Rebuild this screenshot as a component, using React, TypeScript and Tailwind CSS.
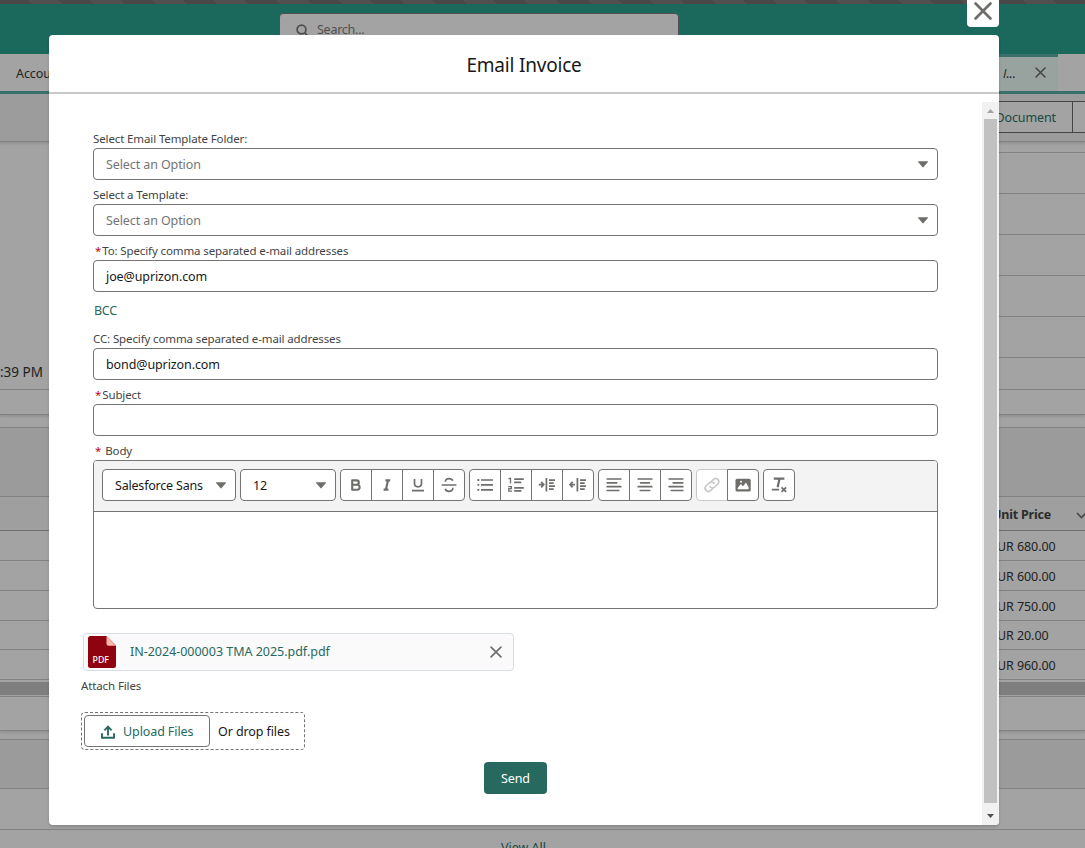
import type { ReactNode } from "react";

const FONT = "font-['Noto_Sans','Open_Sans',sans-serif]";

function Caret() {
  return (
    <svg width="12" height="7" viewBox="0 0 12 7" className="mt-px shrink-0">
      <path d="M1.4.3h9.2q.9 0 .3.8L6.6 6.1q-.6.6-1.2 0L1.1 1.1Q.5.3 1.4.3z" fill="#706e6b" />
    </svg>
  );
}

function Cross({ size, stroke, color }: { size: number; stroke: number; color: string }) {
  const near = stroke / 2 + 0.2;
  const far = size - near;
  return (
    <svg width={size} height={size} viewBox={`0 0 ${size} ${size}`} className="shrink-0">
      <path
        d={`M${near} ${near}L${far} ${far}M${far} ${near}L${near} ${far}`}
        stroke={color}
        strokeWidth={stroke}
        strokeLinecap="round"
        fill="none"
      />
    </svg>
  );
}

function Label({ children, required, gap }: { children: ReactNode; required?: boolean; gap?: string }) {
  return (
    <div className="flex h-4 items-center whitespace-nowrap text-[11.5px] leading-4 tracking-[-0.12px] text-[#444444]">
      {required && <span className={`ml-0.5 text-[#ba0517] ${gap ?? "mr-px"}`}>*</span>}
      <span>{children}</span>
    </div>
  );
}

function Field({ value, placeholder, combo }: { value?: string; placeholder?: string; combo?: boolean }) {
  return (
    <div className="mt-px flex h-8 items-center justify-between rounded-[4px] border border-[#747474] bg-white pr-2 pl-3 text-[12.5px] tracking-[-0.1px]">
      <span className={`pt-[2px] ${value ? "text-[#181818]" : "text-[#747474]"}`}>{value ?? placeholder}</span>
      {combo && <Caret />}
    </div>
  );
}

const G = "#706e6b";

function Icon({ children, color = G }: { children: ReactNode; color?: string }) {
  return (
    <svg width="18" height="18" viewBox="0 0 18 18" fill="none" stroke={color} strokeWidth="1.7">
      {children}
    </svg>
  );
}

const icons: Record<string, ReactNode> = {
  bold: <Icon><path d="M5.2 4.4h4.4a2.1 2.1 0 0 1 0 4.4H5.2zM5.2 8.8h5a2.4 2.4 0 0 1 0 4.9h-5z" strokeWidth="2.1" strokeLinejoin="round" /></Icon>,
  italic: <Icon><path d="M7.4 4.4h4.8M5.6 13.6h4.8M10 4.4L7.9 13.6" strokeWidth="2.1" /></Icon>,
  underline: <Icon><path d="M5.5 3v4.6q0 3.2 3.5 3.2t3.5-3.2V3M3 14.7h12" /></Icon>,
  strike: <Icon><path d="M1.6 9h14.8M12.8 4.8Q11.9 2.6 9.2 2.6q-3.7 0-3.9 3.2M5.2 12.7q.9 2.6 3.8 2.6 3.7 0 3.9-3.6" /></Icon>,
  bullets: <Icon><path d="M5 4h12M5 8.9h12M5 13.8h12" /><path d="M1.4 4h1.9M1.4 8.9h1.9M1.4 13.8h1.9" strokeWidth="1.8" /></Icon>,
  numbers: <Icon><path d="M7.2 3.2h9.6M7.2 6.3h7.2M7.2 11.8h9.6M7.2 14.9h7.2" strokeWidth="1.7" /><path d="M1.5 2.5H3.5V7.6M1.2 10.6H4.4V12.6H1.8V15.1H5" strokeWidth="1.3" /></Icon>,
  indent: <Icon><path d="M.8 8.6h4.4M3.2 5.9l2.5 2.7-2.5 2.7M8.4 2v13.6" strokeWidth="1.7" /><path d="M11 4.1h6M11 7.1h4.7M11 10.1h6M11 13.1h4.7" strokeWidth="1.6" /></Icon>,
  outdent: <Icon><path d="M1.6 8.6H6M3.6 5.9L1.1 8.6l2.5 2.7M8.4 2v13.6" strokeWidth="1.7" /><path d="M11 4.1h6M11 7.1h4.7M11 10.1h6M11 13.1h4.7" strokeWidth="1.6" /></Icon>,
  left: <Icon><path d="M2.2 3h13.6M2.2 6.8h9.6M2.2 10.7h13.6M2.2 14.5h11.5" strokeLinecap="round" /></Icon>,
  center: <Icon><path d="M2.2 3h13.6M4.6 6.8h8.8M2.2 10.7h13.6M4.3 14.5h9.4" strokeLinecap="round" /></Icon>,
  right: <Icon><path d="M2.2 3h13.6M6.2 6.8h9.6M2.2 10.7h13.6M4.3 14.5h11.5" strokeLinecap="round" /></Icon>,
  link: <Icon color="#c9c9c9"><path d="M7 10.7a3.2 3.2 0 0 0 4.8.3l3.1-3a3.1 3.1 0 0 0-4.4-4.5L8.6 5.2M11 7.3A3.2 3.2 0 0 0 6.2 7l-3.1 3a3.1 3.1 0 0 0 4.4 4.5l1.9-1.7" strokeLinecap="round" /></Icon>,
  image: <Icon><rect x="1.5" y="2.7" width="15.2" height="12.8" rx="1.6" fill={G} stroke="none" /><path d="M3.7 13.2v-1.3l3.1-3.9 2.2 2.3 3-3.9 2.6 4.9v1.9z" fill="#fff" stroke="none" /><circle cx="7" cy="5.8" r="1" fill="#fff" stroke="none" /></Icon>,
  clear: <Icon><path d="M3.8 2.6h10.6M9.6 2.6L7.6 11.2" strokeWidth="2.2" /><path d="M1.8 13.6h7.4" strokeWidth="1.8" /><path d="M11.5 11.4l4.6 4.4M16.1 11.4l-4.6 4.4" strokeWidth="1.8" /></Icon>,
};

function ToolGroup({ names }: { names: string[] }) {
  return (
    <div className="flex h-8 rounded-[4px]">
      {names.map((n, i) => (
        <div
          key={n}
          className={`flex h-8 items-center justify-center border bg-white ${i === 0 ? "w-8 rounded-l-[4px]" : "-ml-px w-8"} ${i === names.length - 1 ? "rounded-r-[4px]" : ""} ${n === "link" ? "border-[#c9c9c9]" : "border-[#747474]"}`}
        >
          {icons[n]}
        </div>
      ))}
    </div>
  );
}

function ToolSelect({ text, width }: { text: string; width: string }) {
  return (
    <div className={`flex h-8 items-center justify-between rounded-[4px] border border-[#747474] bg-white pr-[8px] pl-3 text-[12.5px] tracking-[-0.2px] text-[#181818] ${width}`}>
      <span className="pt-[2px]">{text}</span>
      <Caret />
    </div>
  );
}

function Backdrop() {
  const prices = [
    { price: "EUR 680.00", height: "h-[30px]" },
    { price: "EUR 600.00", height: "h-[30px]" },
    { price: "EUR 750.00", height: "h-[30px]" },
    { price: "EUR 20.00", height: "h-[29px]" },
    { price: "EUR 960.00", height: "h-[30px]" },
  ];
  return (
    <div className="flex h-[848px] w-[1085px] flex-col bg-[#a3a3a3] text-[12.5px] text-[#222222]">
      <div className="h-1 shrink-0 bg-[repeating-linear-gradient(45deg,#4a4747_0_22px,#524f4f_22px_44px)]" />
      <div className="flex h-[50px] shrink-0 items-start bg-[#1b685d] pt-[9px]">
        <div className="ml-[279px] flex h-[34px] w-[400px] items-center rounded-[4px] border border-[#505050] bg-[#a3a3a3] pl-4 text-[12.5px] tracking-[-0.25px] text-[#505050]">
          <svg width="13" height="13" viewBox="0 0 13 13" className="mt-px mr-[8px]" fill="none" stroke="#505050" strokeWidth="1.7">
            <circle cx="5.5" cy="5.5" r="4.4" />
            <path d="M8.8 8.8L12 12" strokeLinecap="round" />
          </svg>
          <span>Search...</span>
        </div>
      </div>
      <div className="flex h-10 shrink-0 justify-between border-b-[3px] border-[#397069]">
        <div className="flex items-center pt-[3px] pl-[16px] tracking-[-0.1px]">Accounts</div>
        <div className="mr-[27px] flex w-[120px] items-center justify-end border-t-[3px] border-[#397069] bg-[#98a3a0] pr-[12px]">
          <span className="mr-[19px] italic">
            <span className="font-['Open_Sans']">I</span>...
          </span>
          <div className="pb-[3px]"><Cross size={11} stroke={1.6} color="#484848" /></div>
        </div>
      </div>
      <div className="flex h-12 shrink-0 justify-end border-b border-[#818181] bg-[#9c9c9c] pt-[7px] shadow-[0_2px_2px_rgba(0,0,0,0.1)]">
        <div className="flex h-8 w-[116px] items-center justify-end border border-[#444444] bg-[#a3a3a3] pt-[2px] pr-4 tracking-[-0.1px] text-[#174941]">
          Document
        </div>
        <div className="h-8 w-3 border-y border-[#444444] bg-[#a3a3a3]" />
      </div>
      <div className="flex h-[248px] shrink-0 justify-between border-b border-[#818181]">
        <div className="flex items-end pb-[7px] text-[13.5px]"><span>:39 PM</span></div>
        <div className="w-[500px]">
          <div className="h-[11px] border-b border-[#818181]" />
          <div className="h-[41px] border-b border-[#818181]" />
          <div className="h-[41px] border-b border-[#818181]" />
          <div className="h-[41px] border-b border-[#818181]" />
          <div className="h-[41px] border-b border-[#818181]" />
          <div className="h-[41px] border-b border-[#818181]" />
        </div>
      </div>
      <div className="h-[25px] shrink-0 border-b border-[#818181] shadow-[0_2px_2px_rgba(0,0,0,0.1)]" />
      <div className="h-[13px] shrink-0 border-b border-[#818181]" />
      <div className="h-[69px] shrink-0 border-b border-[#818181] bg-[#9b9b9b]" />
      <div className="flex h-[34px] shrink-0 items-center justify-end border-b border-[#6e6e6e] bg-[#9f9f9f] pt-[3px] font-bold tracking-[-0.2px] text-[#2c2c2c]">
        <span className="mr-[25px]">Unit Price</span>
        <svg width="9" height="7" viewBox="0 0 9 7" fill="none" stroke="#484848" strokeWidth="1.7"><path d="M1 1l4.5 4.5L10 1" /></svg>
      </div>
      {prices.map(({ price, height }) => (
        <div key={price} className={`flex shrink-0 items-center border-b border-[#818181] pt-[3px] ${height}`}>
          <span className="ml-[990px] tracking-[-0.05px]">{price}</span>
        </div>
      ))}
      <div className="h-[17px] shrink-0 border-b border-[#818181] py-0.5"><div className="h-[13px] bg-[#7e7e7e]" /></div>
      <div className="h-[34px] shrink-0 border-b border-[#818181] shadow-[0_2px_2px_rgba(0,0,0,0.1)]" />
      <div className="h-[9px] shrink-0 border-b border-[#818181]" />
      <div className="h-[49px] shrink-0 border-b border-[#818181] bg-[#9b9b9b]" />
      <div className="h-[41px] shrink-0 border-b border-[#818181]" />
      <div className="h-[18px] shrink-0 overflow-hidden pt-[9px] pl-[501px] text-[#174941]">View All</div>
    </div>
  );
}

function Body() {
  return (
    <div className="flex-1 pt-[29px] pl-8">
      <div className="ml-3 w-[845px]">
        <Label>Select Email Template Folder:</Label>
        <Field placeholder="Select an Option" combo />
        <div className="h-[7px]" />
        <Label>Select a Template:</Label>
        <Field placeholder="Select an Option" combo />
        <div className="h-[7px]" />
        <Label required>To: Specify comma separated e-mail addresses</Label>
        <Field value="joe@uprizon.com" />
        <div className="flex h-[39px] items-center pl-px text-[12.5px] tracking-[-0.3px] text-[#27695f]">BCC</div>
        <Label>CC: Specify comma separated e-mail addresses</Label>
        <Field value="bond@uprizon.com" />
        <div className="h-[7px]" />
        <Label required>Subject</Label>
        <Field value="" />
        <div className="h-[7px]" />
        <Label required gap="mr-1">Body</Label>
        <div className="mt-px h-[149px] overflow-hidden rounded-[4px] border border-[#747474]">
          <div className="flex h-[51px] gap-1 border-b border-[#747474] bg-[#f3f3f3] pt-2 pl-2">
            <ToolSelect text="Salesforce Sans" width="w-[134px]" />
            <ToolSelect text="12" width="w-24" />
            <ToolGroup names={["bold", "italic", "underline", "strike"]} />
            <ToolGroup names={["bullets", "numbers", "indent", "outdent"]} />
            <ToolGroup names={["left", "center", "right"]} />
            <ToolGroup names={["link", "image"]} />
            <ToolGroup names={["clear"]} />
          </div>
        </div>
      </div>
      <div className="mt-6 ml-0.5 flex h-[38px] w-[431px] items-center rounded-[4px] border border-[#d8dde6] bg-[#fafafa] pr-[11px] pl-1 text-[12.5px] text-[#27695f]">
        <svg width="28" height="32" viewBox="0 0 28 32" className="mr-[14px]">
          <path d="M2.5 0H18.5L28 9.5V29.5Q28 32 25.5 32H2.5Q0 32 0 29.5V2.5Q0 0 2.5 0z" fill="#8e030f" />
          <path d="M18.5 0L28 9.7H20.5Q18.5 9.7 18.5 7.7z" fill="#feb8ab" />
          <text x="4.5" y="26.8" textLength="16.5" lengthAdjust="spacingAndGlyphs" fill="#fff" fontSize="8.6" fontWeight="500" fontFamily="Noto Sans">PDF</text>
        </svg>
        <span className="flex-1 pt-px tracking-[-0.02px]">IN-2024-000003 TMA 2025.pdf.pdf</span>
        <Cross size={12} stroke={1.7} color="#706e6b" />
      </div>
      <div className="mt-[7px]"><Label>Attach Files</Label></div>
      <div className="mt-[18px] flex h-[38px] w-[224px] items-center rounded-[4px] border border-dashed border-[#747474] pl-0.5 text-[12.5px] tracking-[-0.1px] text-[#181818]">
        <div className="mr-2 flex h-8 w-[126px] items-center rounded-[4px] border border-[#747474] pl-4 text-[#27695f]">
          <svg width="14" height="14" viewBox="0 0 14 14" className="mt-px mr-2" fill="none" stroke="#27695f" strokeWidth="1.9">
            <path d="M1 8.3v4.5h12V8.3M7 10.4V2M3.4 5.3L7 1.7l3.6 3.6" />
          </svg>
          <span className="pt-[2px]">Upload Files</span>
        </div>
        <span className="pt-[2px]">Or drop files</span>
      </div>
      <div className="mt-3 ml-[403px] flex h-8 w-[63px] items-center justify-center rounded-[4px] bg-[#27695f] pt-[2px] text-[12.5px] tracking-[-0.1px] text-white">
        Send
      </div>
    </div>
  );
}

export default function App() {
  return (
    <div className={`relative h-[848px] w-[1085px] overflow-hidden whitespace-nowrap ${FONT}`}>
      <Backdrop />
      <div className="absolute inset-0 pl-[49px]">
        <div className="ml-[918px] flex h-[27px] w-8 items-start justify-center rounded-b-[4px] bg-white pt-[2px]">
          <Cross size={18} stroke={2.7} color="#706e6b" />
        </div>
        <div className="mt-2 flex h-[790px] w-[950px] flex-col overflow-hidden rounded-[4px] bg-white shadow-[0_2px_3px_rgba(0,0,0,0.16)]">
          <div className="flex h-[59px] shrink-0 items-center justify-center border-b-2 border-[#c9c9c9] pt-[3px] text-[19px] tracking-[-0.2px] text-[#181818]">
            Email Invoice
          </div>
          <div className="mt-2 flex flex-1">
            <div className="w-[933px]"><Body /></div>
            <div className="flex h-[723px] w-[17px] flex-col items-center bg-[#f1f1f1]">
              <div className="flex h-[17px] items-center"><svg width="7" height="4" viewBox="0 0 7 4"><path d="M0 4L3.5 0 7 4z" fill="#a3a3a3" /></svg></div>
              <div className="h-[684px] w-[13px] bg-[#c1c1c1]" />
              <div className="flex h-[22px] items-center pt-[3px]"><svg width="7" height="4" viewBox="0 0 7 4"><path d="M0 0L3.5 4 7 0z" fill="#505050" /></svg></div>
            </div>
          </div>
        </div>
      </div>
    </div>
  );
}
